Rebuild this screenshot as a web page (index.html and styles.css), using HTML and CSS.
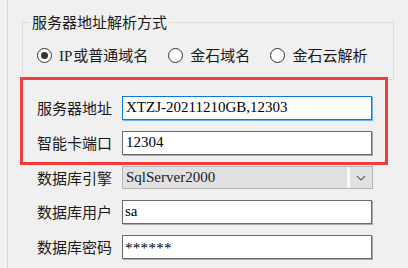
FILE: index.html
```html
<!DOCTYPE html>
<html lang="zh-CN">
<head>
<meta charset="utf-8">
<link rel="stylesheet" href="styles.css">
</head>
<body>
<div class="page">
  <fieldset class="group">
    <legend class="group-title">服务器地址解析方式</legend>
    <div class="radios">
      <div class="radio"><span class="dot checked"></span><span class="rtext"><span class="asc">IP</span>或普通域名</span></div>
      <div class="radio"><span class="dot"></span><span class="rtext">金石域名</span></div>
      <div class="radio"><span class="dot"></span><span class="rtext">金石云解析</span></div>
    </div>
  </fieldset>
  <div class="form">
    <div class="hl">
      <div class="row"><span class="lbl">服务器地址</span><div class="field focus">XTZJ-20211210GB,12303</div></div>
      <div class="row"><span class="lbl">智能卡端口</span><div class="field">12304</div></div>
    </div>
    <div class="row combo-row"><span class="lbl">数据库引擎</span>
      <div class="combo"><span class="combo-text">SqlServer2000</span><span class="combo-btn"><svg width="10" height="6" viewBox="0 0 10 6"><polyline points="0.8,0.8 5,5 9.2,0.8" fill="none" stroke="#5f5f5f" stroke-width="1.2"/></svg></span></div>
    </div>
    <div class="row"><span class="lbl">数据库用户</span><div class="field small">sa</div></div>
    <div class="row"><span class="lbl">数据库密码</span><div class="field small pwd">******</div></div>
  </div>
</div>
</body>
</html>
```
FILE: styles.css
```css
html, body {
  margin: 0;
  background: #f0f0f0;
}
body {
  width: 408px;
  height: 268px;
  overflow: hidden;
  font-family: "Noto Sans CJK SC", "Microsoft YaHei", sans-serif;
  font-size: 15px;
  color: #1a1a1a;
}
.page {
  margin-left: 7px;
  border-left: 1px solid #d9d9d9;
  height: 268px;
  box-sizing: border-box;
  padding-top: 12px;
}
.group {
  margin: 0 0 0 14px;
  width: 372px;
  min-width: 0;
  box-sizing: border-box;
  border: 1px solid #dcdcdc;
  padding: 13px 0 14px 14px;
}
.group-title {
  margin-left: -7px;
  padding: 0 2px;
  line-height: 20px;
}
.radios {
  display: flex;
  align-items: center;
  gap: 20px;
  height: 20px;
}
.radio {
  display: flex;
  align-items: center;
  gap: 7px;
  line-height: 20px;
}
.dot {
  width: 15px;
  height: 15px;
  box-sizing: border-box;
  border: 1px solid #333;
  border-radius: 50%;
  background: #fff;
  display: flex;
  align-items: center;
  justify-content: center;
}
.dot.checked::after {
  content: "";
  width: 7px;
  height: 7px;
  border-radius: 50%;
  background: #333;
}
.asc {
  font-family: "Liberation Serif", serif;
  font-size: 15px;
  padding-right: 1px;
}
.form {
  margin: 16px 0 0 29px;
  width: 336px;
  display: flex;
  flex-direction: column;
  gap: 11px;
}
.hl {
  position: relative;
  display: flex;
  flex-direction: column;
  gap: 11px;
}
.hl::after {
  content: "";
  position: absolute;
  left: -17px;
  right: -15px;
  top: -19px;
  bottom: -10px;
  border: 3px solid #f03c3c;
  pointer-events: none;
}
.row {
  display: flex;
  align-items: center;
  height: 24px;
}
.combo-row {
  height: 23px;
}
.lbl {
  width: 85px;
  flex: none;
  line-height: 20px;
}
.field {
  width: 250px;
  height: 24px;
  box-sizing: border-box;
  border: 1px solid #6a6a6a;
  box-shadow: 1px 1px 0 #ababab;
  background: #fff;
  font-family: "Liberation Serif", serif;
  font-size: 15px;
  line-height: 21px;
  padding: 0 0 1px 3px;
  color: #000;
  white-space: nowrap;
}
.field.focus {
  border-color: #0a7ad6;
  box-shadow: 1px 1px 0 #6fb2ec;
}
.field.small {
  padding-left: 2px;
}
.field.pwd {
  letter-spacing: 0.3px;
  padding-top: 3px;
  padding-bottom: 0;
  line-height: 19px;
}
.combo {
  width: 251px;
  height: 23px;
  box-sizing: border-box;
  border: 1px solid #b4b4b4;
  background: #e1e1e1;
  display: flex;
  align-items: center;
}
.combo-text {
  flex: 1;
  padding-left: 3px;
  font-family: "Liberation Serif", serif;
  font-size: 15px;
  color: #222;
  line-height: 21px;
}
.combo-btn {
  width: 22px;
  height: 21px;
  border-left: 3px solid #f8f8f8;
  display: flex;
  align-items: center;
  justify-content: center;
}
```
